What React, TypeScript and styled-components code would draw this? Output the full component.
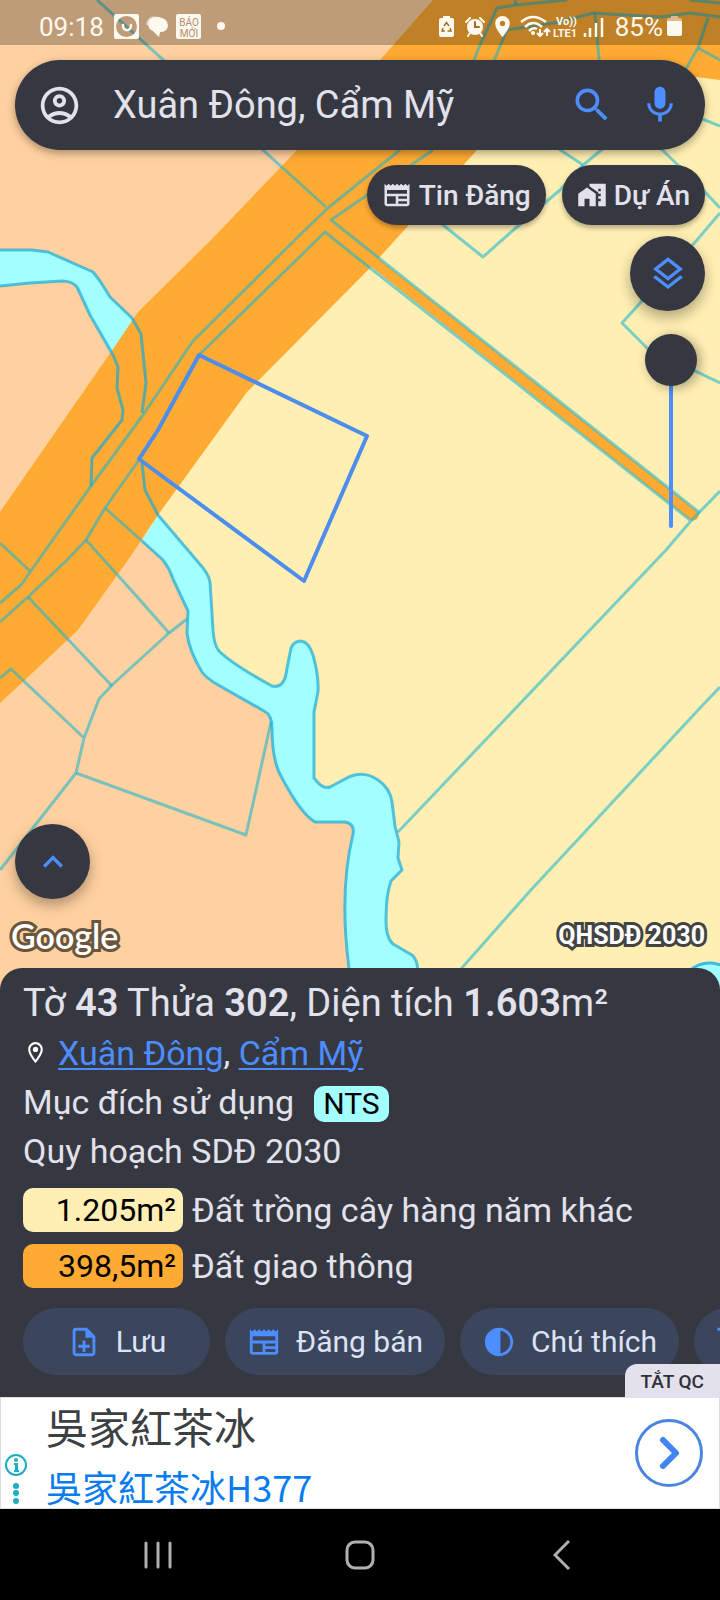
import React, { useState } from "react";
import styled, { createGlobalStyle } from "styled-components";
import {
  MdSearch,
  MdMic,
  MdOutlineAccountCircle,
  MdOutlineNewspaper,
  MdHomeWork,
  MdOutlineLayers,
  MdContrast,
  MdOutlineNoteAdd,
  MdKeyboardArrowUp,
  MdOutlineLocationOn,
  MdOutlineShoppingCart,
  MdLocationOn,
} from "react-icons/md";

const colors = {
  panel: "#363841",
  text: "#e2e1ec",
  accent: "#4c8dff",
  pill: "#3b465c",
  farm: "#ffefb3",
  road: "#ffab33",
  rural: "#ffd1a0",
  water: "#a3ffff",
};

const GlobalStyle = createGlobalStyle`
  *, *::before, *::after { box-sizing: border-box; }
  body { margin: 0; background: #000; font-family: Roboto, "Noto Sans CJK TC", sans-serif; }
  button, input { font-family: inherit; margin: 0; padding: 0; border: 0; }
  svg { display: block; flex: none; }
`;

const Page = styled.div`
  display: flex;
  flex-direction: column;
  min-height: 100vh;
  overflow: hidden;
`;

const MapArea = styled.main`
  position: relative;
  flex: 1;
  display: flex;
  flex-direction: column;
  padding-bottom: 30px;
  background: ${colors.farm};
`;

const MapCanvas = styled.svg`
  position: absolute;
  inset: 0;
  width: 100%;
  height: 100%;
`;

const StatusBar = styled.header`
  position: relative;
  display: flex;
  align-items: center;
  justify-content: space-between;
  height: 45px;
  padding: 8px 38px 0 39px;
  background: rgba(0, 0, 0, 0.25);
  color: #fdf8f0;
  font-size: 26px;
  line-height: 36px;
`;

const StatusGroup = styled.div<{ $gap: number }>`
  display: flex;
  align-items: center;
  gap: ${(p) => p.$gap}px;
`;

const SearchBar = styled.form`
  position: relative;
  display: flex;
  align-items: center;
  height: 90px;
  margin: 15px 15px 0;
  padding: 0 23px 0 22px;
  border-radius: 45px;
  background: ${colors.panel};
  color: ${colors.text};
  box-shadow: 0 3px 8px rgba(0, 0, 0, 0.35);
`;

const SearchInput = styled.input`
  flex: 1;
  min-width: 0;
  height: 60px;
  margin-left: 31px;
  background: transparent;
  color: inherit;
  font-size: 38px;
  outline: none;
`;

const IconButton = styled.button<{ $accent?: boolean }>`
  display: grid;
  place-items: center;
  background: transparent;
  color: ${(p) => (p.$accent ? colors.accent : "inherit")};
`;

const SearchActions = styled.div`
  display: flex;
  gap: 24px;
`;

const Chips = styled.div`
  position: relative;
  display: flex;
  justify-content: flex-end;
  gap: 16px;
  margin: 15px 15px 0;
`;

const Chip = styled.button`
  display: flex;
  align-items: center;
  gap: 7px;
  height: 60px;
  padding: 0 15px;
  border-radius: 30px;
  background: ${colors.panel};
  color: ${colors.text};
  font-size: 28px;
  font-weight: 500;
  box-shadow: 0 3px 5px rgba(0, 0, 0, 0.3);
`;

const MapControls = styled.div`
  position: relative;
  display: flex;
  flex-direction: column;
  align-items: flex-end;
  gap: 23px;
  margin: 11px 15px 0;
`;

const RoundButton = styled.button`
  display: grid;
  place-items: center;
  width: 75px;
  height: 75px;
  border-radius: 50%;
  background: ${colors.panel};
  color: ${colors.accent};
  box-shadow: 0 6px 14px rgba(0, 0, 0, 0.32);
`;

const OpacitySlider = styled.input`
  appearance: none;
  writing-mode: vertical-lr;
  direction: rtl;
  width: 52px;
  height: 194px;
  margin-right: 8px;
  background: transparent;

  &::-webkit-slider-runnable-track {
    width: 4px;
    height: 100%;
    border-radius: 2px;
    background: ${colors.accent};
  }
  &::-webkit-slider-thumb {
    appearance: none;
    width: 52px;
    height: 52px;
    margin-left: -24px;
    border-radius: 50%;
    background: ${colors.panel};
    box-shadow: 3px 2px 12px rgba(0, 0, 0, 0.35);
  }
`;

const MapFooter = styled.div`
  position: relative;
  display: flex;
  flex-direction: column;
  gap: 13px;
  margin-top: auto;
  padding-left: 15px;
`;

const MapLabels = styled.div`
  display: flex;
  align-items: center;
  justify-content: space-between;
  height: 48px;
  margin-left: -4px;
  padding-right: 15px;
  color: #fff;
`;

const Attribution = styled.span`
  font-family: Lato, sans-serif;
  font-size: 34px;
  font-weight: 600;
  line-height: 48px;
  -webkit-text-stroke: 6px #6a563c;
  paint-order: stroke fill;
`;

const LayerName = styled.span`
  font-size: 25px;
  font-weight: 700;
  line-height: 32px;
  -webkit-text-stroke: 6px #434343;
  paint-order: stroke fill;
`;

const Sheet = styled.section`
  position: relative;
  margin-top: -22px;
  padding: 10px 0 22px 23px;
  border-radius: 22px 22px 0 0;
  background: ${colors.panel};
  color: ${colors.text};
  overflow: hidden;
`;

const ParcelTitle = styled.h1`
  margin: 0;
  font-size: 38px;
  font-weight: 400;
  line-height: 50px;
  white-space: nowrap;

  strong { font-weight: 600; }
`;

const InfoRow = styled.div`
  display: flex;
  align-items: center;
  height: 49px;
  font-size: 34px;
  white-space: nowrap;
`;

const Address = styled.span`
  margin-left: 10px;
`;

const PlaceLink = styled.a`
  color: ${colors.accent};
  text-decoration: underline;
  text-decoration-thickness: 2px;
  text-underline-offset: 3px;
`;

const PurposeTag = styled.span`
  margin: 5px 0 0 20px;
  padding: 0 9px;
  border-radius: 10px;
  background: ${colors.water};
  color: #000;
  font-size: 30px;
  line-height: 36px;
`;

const ZoneList = styled.ul`
  display: flex;
  flex-direction: column;
  gap: 12px;
  margin: 13px 0 20px;
  padding: 0;
  list-style: none;
`;

const ZoneItem = styled.li`
  display: flex;
  align-items: center;
  gap: 9px;
  height: 44px;
  font-size: 34px;
  white-space: nowrap;
`;

const AreaBadge = styled.span<{ $color: string }>`
  width: 160px;
  padding-right: 7px;
  border-radius: 10px;
  background: ${(p) => p.$color};
  color: #000;
  font-size: 32px;
  line-height: 44px;
  text-align: right;
`;

const Actions = styled.div`
  display: flex;
  gap: 15px;
  overflow: hidden;
`;

const ActionButton = styled.button`
  display: flex;
  flex: none;
  align-items: center;
  justify-content: center;
  gap: 15px;
  height: 67px;
  min-width: 187px;
  padding: 0 22px;
  border-radius: 34px;
  background: ${colors.pill};
  color: #dde3f5;
  font-size: 30px;

  svg { color: ${colors.accent}; }
  &:last-child { justify-content: flex-start; }
`;

const AdArea = styled.aside`
  position: relative;
  display: flex;
  align-items: center;
  height: 112px;
  padding: 0 16px 0 4px;
  border: 1px solid #dcdce4;
  background: #fff;
`;

const HideAdButton = styled.button`
  position: absolute;
  right: -1px;
  bottom: 100%;
  height: 34px;
  padding: 0 16px;
  border-radius: 12px 0 0 0;
  background: ${colors.text};
  color: #303136;
  font-size: 19px;
  font-weight: 500;
`;

const AdMarks = styled.div`
  align-self: flex-end;
  margin-bottom: 4px;
`;

const AdText = styled.div`
  flex: 1;
  align-self: flex-start;
  margin-left: 18px;
  color: #3c4043;
  font-family: "Noto Sans CJK TC", sans-serif;
  font-size: 42px;
  line-height: 56px;
`;

const AdLink = styled.a`
  display: block;
  color: #0a7cf0;
  font-size: 36px;
  line-height: 64px;
  text-decoration: none;
`;

const AdOpen = styled.button`
  display: grid;
  place-items: center;
  width: 68px;
  height: 68px;
  border: 3px solid #4a86e0;
  border-radius: 50%;
  background: #fff;
`;

const NavBar = styled.nav`
  display: flex;
  height: 91px;
  padding: 0 8%;
  background: #000;
`;

const NavButton = styled.button`
  flex: 1;
  display: grid;
  place-items: center;
  background: transparent;
`;

const parcelLines = [
  "M97 0L326 207",
  "M400 150L360 182L328 208L305 230L193 341L143 415L91 486L30 572L22 584L0 603",
  "M470 70L480 45L497 8L516 5L567 0",
  "M515 0L516 5",
  "M490 70L507 30L560 22L593 13L660 17L690 13L720 17",
  "M690 0L720 3",
  "M595 13L600 70",
  "M708 18L698 48L684 72",
  "M698 48L720 60",
  "M433 150L360 200L331 220L360 243L700 513",
  "M200 354L325 232L360 260L690 520",
  "M139 460L105 508L86 540L67 560L28 597L0 622",
  "M105 508L142 541",
  "M86 540L140 600L169 633",
  "M28 597L112 686",
  "M0 678L11 669L83 737",
  "M0 543L30 571",
  "M187 619L169 633L112 685L99 699L84 738L76 773L0 870",
  "M76 773L246 835L271 722",
  "M720 491L690 522L666 550L398 832",
  "M720 687L700 708L530 891L453 978",
  "M550 143L583 165L610 143",
  "M583 165L560 190L502 240L483 257L443 225L432 215",
  "M655 143L680 167L705 192L720 208",
  "M720 213L697 240L622 323L647 348L720 383",
  "M700 118L720 126",
];

const streamTop =
  "M0 250H32L48 252L93 272L100 281L110 297L132 318L141 334L146 383L142 413";
const streamBottom =
  "M0 286L30 283L62 281Q72 281 77 287L90 315L113 355L118 367L117 388L123 410L122 420L92 458L91 486";
const riverEast =
  "M142 463L145 490L158 515L198 562Q209 574 210 582L213 630Q214 645 219 651Q232 664 272 686Q285 689 287 668L291 648Q294 641 301 641Q309 642 313 655Q319 676 318 692L314 712V778Q323 790 330 787L345 779Q362 769 378 780Q390 788 392 802L395 826L399 842L398 858L402 870L391 881Q386 895 386 920Q386 938 393 944L412 955Q417 959 418 970L424 992";
const riverWest =
  "M142 541L162 559Q169 567 173 579L188 611L187 633Q189 651 202 672Q207 679 220 686L264 711Q272 715 272 728Q272 762 282 778Q301 814 315 822H345Q355 824 353 834Q339 892 349 968L352 992";

function LandUseMap() {
  return (
    <MapCanvas viewBox="0 0 720 990" preserveAspectRatio="xMidYMax slice" aria-label="Bản đồ quy hoạch">
      <rect width="720" height="990" fill={colors.farm} />
      <path fill={colors.rural} d="M0 0H440L0 520Z" />
      <path
        fill={colors.rural}
        d="M0 690L150 530L172 560L198 611L197 645L220 680L275 714L300 770L325 810L370 815L360 880L370 992H0Z"
      />
      <path
        fill={colors.water}
        d="M0 250H32L48 252L93 272L100 281L110 297L132 318L141 334L120 370L90 315L77 287Q72 281 62 281L30 283L0 286Z"
      />
      <path
        fill={colors.water}
        d="M158 515L198 562Q209 574 210 582L213 630Q214 645 219 651Q232 664 272 686Q285 689 287 668L291 648Q294 641 301 641Q309 642 313 655Q319 676 318 692L314 712V778Q323 790 330 787L345 779Q362 769 378 780Q390 788 392 802L395 826L399 842L398 858L402 870L391 881Q386 895 386 920Q386 938 393 944L412 955Q417 959 418 970L424 992H352L349 968Q339 892 353 834Q355 824 345 822H315Q301 814 282 778Q272 762 272 728Q272 715 264 711L220 686Q207 679 202 672Q189 651 187 633L188 611L173 579Q169 567 162 559L142 541Z"
      />
      <path
        fill={colors.road}
        d="M433 0L380 60L297 150L211 240L138 312L113 349L0 512V703L27 678L78 630L128 560L158 515L247 392L368 270L477 150L520 112L590 85L640 76L688 76L720 80V0Z"
      />
      <path d="M330 227L693 515" stroke={colors.road} strokeWidth="11" strokeLinecap="round" />
      <path d="M684 978Q694 962 712 963L722 965V992H690Z" fill={colors.water} stroke="#3cbce0" strokeWidth="3" />
      <g fill="none" stroke="#14b4d0" strokeOpacity="0.56" strokeWidth="3" strokeLinejoin="round">
        {parcelLines.map((d) => (
          <path key={d} d={d} />
        ))}
      </g>
      <g fill="none" stroke="#12a8d8" strokeOpacity="0.68" strokeWidth="3" strokeLinejoin="round">
        <path d={streamTop} />
        <path d={streamBottom} />
        <path d={riverEast} />
        <path d={riverWest} />
      </g>
      <path
        d="M199 355L367 436L304 581L139 459L158 430Z"
        fill="none"
        stroke="#4c8dee"
        strokeWidth="4"
        strokeLinejoin="round"
      />
    </MapCanvas>
  );
}

function NotificationIcons() {
  return (
    <svg width="112" height="26" viewBox="0 0 112 26" fill="#fdf8f0">
      <path
        fillRule="evenodd"
        d="M2 0H23Q25 0 25 2V23Q25 25 23 25H2Q0 25 0 23V2Q0 0 2 0ZM12.500 2a10.500 10.500 0 1 0 0 21a10.500 10.500 0 1 0 0-21Z"
      />
      <path d="M9 11C9 18 17 18 17 11" fill="none" stroke="#fdf8f0" strokeWidth="2.500" strokeLinecap="round" />
      <path d="M36 5Q40 3 44 3Q54 4 54 12Q53 18 46 18L45 23L39 17Q34 15 34 10Q34 7 36 5Z" />
      <path d="M33 11Q33 4 40 3L46 4" fill="none" stroke="#fdf8f0" strokeWidth="1" />
      <rect x="62" width="25" height="25" rx="2" />
      <g fill="#b3906a" fontFamily="Roboto, sans-serif" fontSize="10" textAnchor="middle">
        <text x="75" y="12">BÁO</text>
        <text x="75" y="23">MỚI</text>
      </g>
      <circle cx="107" cy="12" r="4" />
    </svg>
  );
}

function BatterySaverIcon() {
  return (
    <svg width="15" height="22" viewBox="0 0 15 22">
      <path d="M4 2V0H11V2H13Q15 2 15 4V19Q15 21 13 21H2Q0 21 0 19V4Q0 2 2 2Z" fill="#fdf8f0" />
      <path d="M5 10L7.500 6.500L10 10M11 12L12 15H8.500M6 15H3L4 12" fill="none" stroke="#a96d1c" strokeWidth="1.500" />
    </svg>
  );
}

function AlarmIcon() {
  return (
    <svg width="20" height="20" viewBox="0 0 20 20" fill="none" stroke="#fdf8f0" strokeWidth="2" strokeLinecap="round">
      <circle cx="10" cy="10" r="8" fill="#fdf8f0" stroke="none" />
      <path d="M1 5L5 1M19 5L15 1M3 19L5 16M17 19L15 16" />
      <path d="M10 5V10H14" stroke="#a96d1c" />
    </svg>
  );
}

function NetworkIcons() {
  return (
    <svg width="84" height="24" viewBox="0 0 84 24" fill="none" stroke="#fdf8f0" strokeWidth="2.500">
      <path d="M1 7Q13 -3 26 7M5 12Q13 4 22 12M9 16Q13 12 17 14" />
      <circle cx="13" cy="18" r="2" fill="#fdf8f0" stroke="none" />
      <path d="M20 14V21M17 18L20 21L23 18M27 21V14M24 17L27 14L30 17" strokeWidth="2" />
      <g fill="#fdf8f0" stroke="none" fontFamily="Roboto, sans-serif" fontSize="11" fontWeight="700">
        <text x="36" y="10">Vo))</text>
        <text x="33" y="22">LTE1</text>
      </g>
      <path d="M65 22V18M70 22V13M76 22V8M82 22V3" />
    </svg>
  );
}

function BatteryIcon() {
  return (
    <svg width="15" height="21" viewBox="0 0 15 21">
      <path d="M4 2V0H11V2H13Q15 2 15 4V6H0V4Q0 2 2 2Z" fill="#dcb98a" />
      <path d="M0 5H15V18Q15 20 13 20H2Q0 20 0 18Z" fill="#fdf8f0" />
    </svg>
  );
}

const zones = [
  { area: "1.205m²", name: "Đất trồng cây hàng năm khác", color: colors.farm },
  { area: "398,5m²", name: "Đất giao thông", color: colors.road },
];

export default function App() {
  const [query, setQuery] = useState("Xuân Đông, Cẩm Mỹ");
  const [opacity, setOpacity] = useState(100);

  return (
    <Page>
      <GlobalStyle />
      <MapArea>
        <LandUseMap />
        <StatusBar>
          <StatusGroup $gap={10}>
            <span>09:18</span>
            <NotificationIcons />
          </StatusGroup>
          <StatusGroup $gap={11}>
            <BatterySaverIcon />
            <StatusGroup $gap={5}>
              <AlarmIcon />
              <MdLocationOn size={25} />
              <NetworkIcons />
            </StatusGroup>
            <StatusGroup $gap={4}>
              <span>85%</span>
              <BatteryIcon />
            </StatusGroup>
          </StatusGroup>
        </StatusBar>

        <SearchBar role="search" onSubmit={(e) => e.preventDefault()}>
          <IconButton type="button" aria-label="Tài khoản">
            <MdOutlineAccountCircle size={45} />
          </IconButton>
          <SearchInput
            aria-label="Tìm kiếm"
            value={query}
            onChange={(e) => setQuery(e.target.value)}
          />
          <SearchActions>
            <IconButton $accent type="submit" aria-label="Tìm">
              <MdSearch size={44} />
            </IconButton>
            <IconButton $accent type="button" aria-label="Giọng nói">
              <MdMic size={44} />
            </IconButton>
          </SearchActions>
        </SearchBar>

        <Chips>
          <Chip type="button">
            <MdOutlineNewspaper size={30} />
            Tin Đăng
          </Chip>
          <Chip type="button">
            <MdHomeWork size={30} />
            Dự Án
          </Chip>
        </Chips>

        <MapControls>
          <RoundButton type="button" aria-label="Lớp bản đồ">
            <MdOutlineLayers size={40} />
          </RoundButton>
          <OpacitySlider
            type="range"
            aria-label="Độ mờ"
            min={0}
            max={100}
            value={opacity}
            onChange={(e) => setOpacity(Number(e.target.value))}
          />
        </MapControls>

        <MapFooter>
          <RoundButton type="button" aria-label="Mở rộng">
            <MdKeyboardArrowUp size={40} />
          </RoundButton>
          <MapLabels>
            <Attribution>Google</Attribution>
            <LayerName>QHSDĐ 2030</LayerName>
          </MapLabels>
        </MapFooter>
      </MapArea>

      <Sheet>
        <ParcelTitle>
          Tờ <strong>43</strong> Thửa <strong>302</strong>, Diện tích <strong>1.603</strong>m²
        </ParcelTitle>
        <InfoRow>
          <MdOutlineLocationOn size={25} color="#fff" />
          <Address>
            <PlaceLink href="#xuan-dong">Xuân Đông</PlaceLink>,{" "}
            <PlaceLink href="#cam-my">Cẩm Mỹ</PlaceLink>
          </Address>
        </InfoRow>
        <InfoRow>
          Mục đích sử dụng
          <PurposeTag>NTS</PurposeTag>
        </InfoRow>
        <InfoRow>Quy hoạch SDĐ 2030</InfoRow>
        <ZoneList>
          {zones.map((zone) => (
            <ZoneItem key={zone.name}>
              <AreaBadge $color={zone.color}>{zone.area}</AreaBadge>
              {zone.name}
            </ZoneItem>
          ))}
        </ZoneList>
        <Actions>
          <ActionButton type="button">
            <MdOutlineNoteAdd size={34} />
            Lưu
          </ActionButton>
          <ActionButton type="button">
            <MdOutlineNewspaper size={34} />
            Đăng bán
          </ActionButton>
          <ActionButton type="button">
            <MdContrast size={34} />
            Chú thích
          </ActionButton>
          <ActionButton type="button" aria-label="Mua">
            <MdOutlineShoppingCart size={34} />
          </ActionButton>
        </Actions>
      </Sheet>

      <AdArea>
        <HideAdButton type="button">TẮT QC</HideAdButton>
        <AdMarks>
          <svg width="23" height="50" viewBox="0 0 23 50" fill="#1badc0">
            <circle cx="11" cy="11" r="10" fill="none" stroke="#1badc0" strokeWidth="2" />
            <circle cx="11" cy="6" r="2" />
            <path d="M9 9H13V16H14V18H9V16H10V11H9Z" />
            <circle cx="11" cy="32" r="3" />
            <circle cx="11" cy="39" r="3" />
            <circle cx="11" cy="47" r="3" />
          </svg>
        </AdMarks>
        <AdText>
          吳家紅茶冰
          <AdLink href="#ad">吳家紅茶冰H377</AdLink>
        </AdText>
        <AdOpen type="button" aria-label="Mở quảng cáo">
          <svg width="62" height="62" viewBox="0 0 62 62">
            <path d="M25 18L38 31L25 44" fill="none" stroke="#4284f3" strokeWidth="6" strokeLinecap="round" strokeLinejoin="round" />
          </svg>
        </AdOpen>
      </AdArea>

      <NavBar>
        <NavButton type="button" aria-label="Gần đây">
          <svg width="28" height="28" viewBox="0 0 28 28" stroke="#b0b0b0" strokeWidth="3" strokeLinecap="round">
            <path d="M2 2V26M14 2V26M26 2V26" />
          </svg>
        </NavButton>
        <NavButton type="button" aria-label="Trang chủ">
          <svg width="30" height="30" viewBox="0 0 30 30" fill="none" stroke="#b0b0b0" strokeWidth="3">
            <rect x="2" y="2" width="26" height="26" rx="8" />
          </svg>
        </NavButton>
        <NavButton type="button" aria-label="Quay lại">
          <svg width="17" height="30" viewBox="0 0 17 30" fill="none" stroke="#b0b0b0" strokeWidth="3">
            <path d="M16 1L2 15L16 29" />
          </svg>
        </NavButton>
      </NavBar>
    </Page>
  );
}
